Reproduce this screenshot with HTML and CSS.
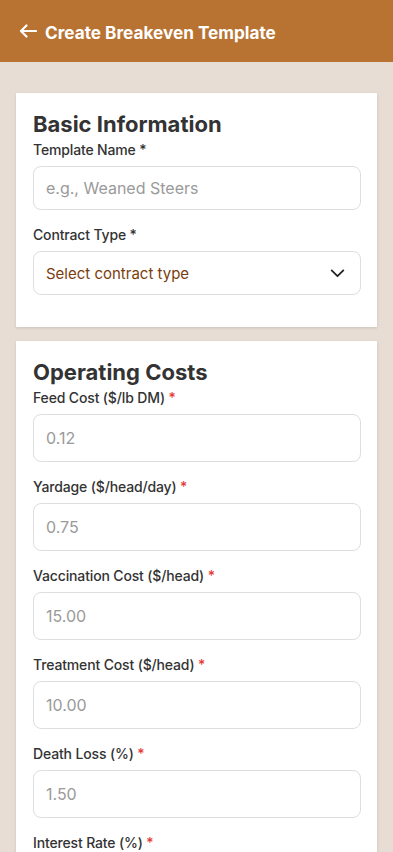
FILE: index.html
```html
<!DOCTYPE html>
<html lang="en">
<head>
  <meta charset="UTF-8">
  <meta name="viewport" content="width=device-width, initial-scale=1.0">
  <title>Create Breakeven Template</title>
  <link rel="stylesheet" href="styles.css">
</head>
<body>
  <header class="top-bar">
    <svg class="back-icon" viewBox="0 0 18 14" width="18" height="14">
      <path d="M17 7H2M7.5 1.5L2 7l5.5 5.5" fill="none" stroke="#fff" stroke-width="2.2" stroke-linecap="round" stroke-linejoin="round"/>
    </svg>
    <div class="top-title">Create Breakeven Template</div>
  </header>

  <main class="content">
    <section class="card">
      <h2 class="card-title">Basic Information</h2>
      <div class="field">
        <label class="label">Template Name *</label>
        <input class="text-input" type="text" placeholder="e.g., Weaned Steers">
      </div>
      <div class="field">
        <label class="label">Contract Type *</label>
        <div class="select">
          <span>Select contract type</span>
          <svg viewBox="0 0 16 10" width="15" height="9">
            <path d="M1.5 1.5L8 8l6.5-6.5" fill="none" stroke="#222" stroke-width="2" stroke-linecap="round" stroke-linejoin="round"/>
          </svg>
        </div>
      </div>
    </section>

    <section class="card">
      <h2 class="card-title">Operating Costs</h2>
      <div class="field">
        <label class="label">Feed Cost ($/lb DM) <span class="req">*</span></label>
        <input class="num-input" type="text" placeholder="0.12">
      </div>
      <div class="field">
        <label class="label">Yardage ($/head/day) <span class="req">*</span></label>
        <input class="num-input" type="text" placeholder="0.75">
      </div>
      <div class="field">
        <label class="label">Vaccination Cost ($/head) <span class="req">*</span></label>
        <input class="num-input" type="text" placeholder="15.00">
      </div>
      <div class="field">
        <label class="label">Treatment Cost ($/head) <span class="req">*</span></label>
        <input class="num-input" type="text" placeholder="10.00">
      </div>
      <div class="field">
        <label class="label">Death Loss (%) <span class="req">*</span></label>
        <input class="num-input" type="text" placeholder="1.50">
      </div>
      <div class="field">
        <label class="label">Interest Rate (%) <span class="req">*</span></label>
        <input class="num-input" type="text" placeholder="8.00">
      </div>
    </section>
  </main>
</body>
</html>
```

FILE: styles.css
```css
body {
  margin: 0;
  font-family: 'Inter', 'Liberation Sans', sans-serif;
  background: #e7ddd4;
  color: #333;
  overflow: hidden;
}
.top-bar {
  height: 62px;
  background: #b87333;
  display: flex;
  align-items: center;
  padding: 0 18px 0 19px;
  gap: 8px;
}
.back-icon {
  flex-shrink: 0;
}
.top-title {
  color: #fff;
  font-size: 17.2px;
  font-weight: 700;
  margin-top: 2px;
}
.content {
  padding: 31px 16px;
  display: flex;
  flex-direction: column;
  gap: 14px;
}
.card {
  background: #fff;
  padding: 18px 16px 0 17px;
  box-shadow: 0 1px 3px rgba(0, 0, 0, 0.12);
}
.card-title {
  margin: 0 0 4px;
  font-size: 22px;
  line-height: 26px;
  font-weight: 700;
  color: #333;
}
.field {
  display: flex;
  flex-direction: column;
  gap: 8px;
  margin-bottom: 16px;
}
.card .field:last-child {
  margin-bottom: 32px;
}
.label {
  font-size: 14px;
  line-height: 17px;
  font-weight: 500;
  letter-spacing: -0.15px;
  color: #333;
}
.req {
  color: #e53935;
}
.text-input,
.num-input {
  box-sizing: border-box;
  width: 100%;
  border: 1px solid #dedede;
  border-radius: 8px;
  padding: 0 12px;
  font-family: inherit;
  font-size: 16px;
  color: #333;
  background: #fff;
  outline: none;
}
.text-input {
  height: 44px;
}
.num-input {
  height: 48px;
}
.text-input::placeholder,
.num-input::placeholder {
  color: #9a9a9a;
}
.select {
  box-sizing: border-box;
  height: 44px;
  border: 1px solid #dedede;
  border-radius: 8px;
  padding: 0 15px 0 12px;
  display: flex;
  align-items: center;
  justify-content: space-between;
  font-size: 15px;
  color: #7a3d0c;
}
```
